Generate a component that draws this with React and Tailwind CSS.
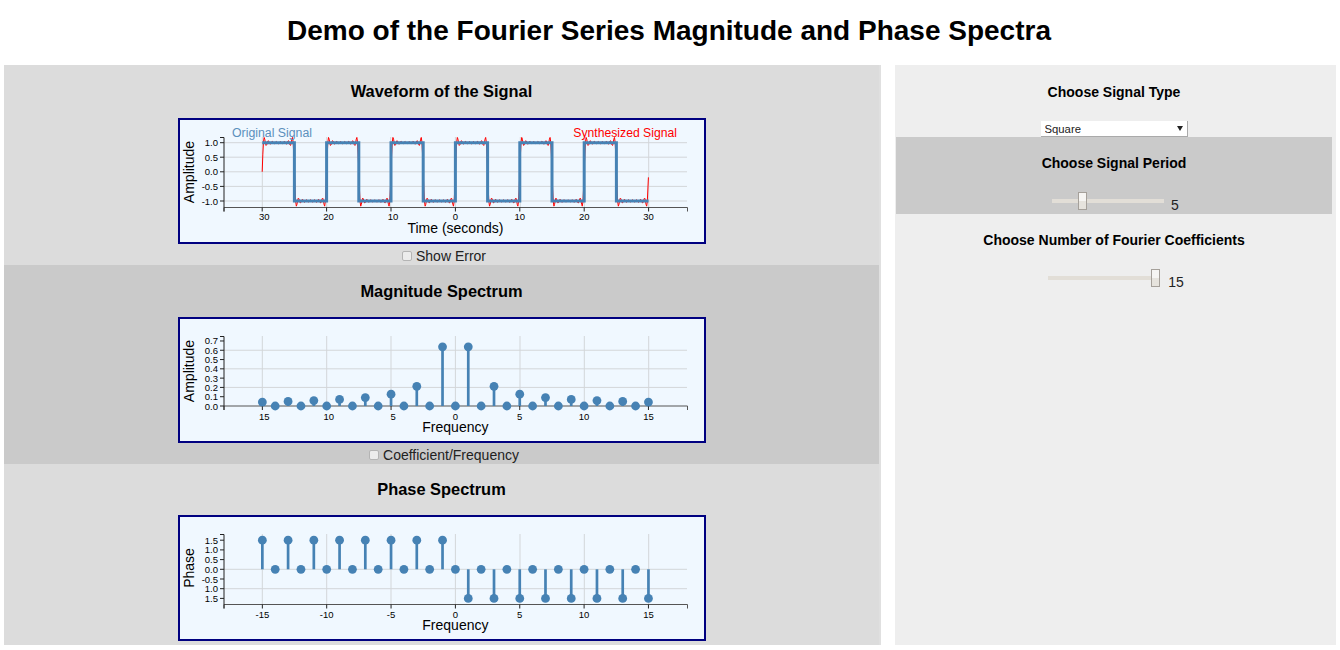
import React from "react";

const STEEL = "#4682b4";
const GRID = "#d3d6d9";
const FONT = { fontFamily: '"Liberation Sans", Arial, sans-serif' };

function Axes({ yAxisTop, xAxisY, cx, sx, xTicks, yTicks, yLabel, xLabel, xLabelY, yLabelX, yLabelY, hGrid, vGrid, gridTop, tickY }) {
  return (
    <g style={FONT}>
      {hGrid.map((y) => (
        <line key={"h" + y} x1={224} x2={687} y1={y} y2={y} stroke={GRID} strokeWidth={1} />
      ))}
      {vGrid.map((x) => (
        <line key={"v" + x} x1={x} x2={x} y1={gridTop} y2={xAxisY} stroke={GRID} strokeWidth={1} />
      ))}
      <path d={`M224 ${xAxisY + 4}V${xAxisY}H687.5V${xAxisY + 4}`} fill="none" stroke="#555" strokeWidth={1} />
      <path d={`M220 ${yAxisTop}H224V${xAxisY + 4}`} fill="none" stroke="#222" strokeWidth={1} />
      {xTicks.map(([v, label, dx]) => (
        <g key={"x" + v}>
          <line x1={cx + v * sx} x2={cx + v * sx} y1={xAxisY} y2={xAxisY + 4} stroke="#222" strokeWidth={1} />
          <text x={cx + v * sx + (dx || 0)} y={tickY} fontSize={9.5} textAnchor="middle" fill="#000">
            {label}
          </text>
        </g>
      ))}
      {yTicks.map(([y, label]) => (
        <g key={"y" + y}>
          <line x1={220} x2={224} y1={y} y2={y} stroke="#222" strokeWidth={1} />
          <text x={218} y={y + 3.5} fontSize={9.5} textAnchor="end" fill="#000">
            {label}
          </text>
        </g>
      ))}
      <text x={cx} y={xLabelY} fontSize={14} textAnchor="middle" fill="#000">
        {xLabel}
      </text>
      <text
        x={yLabelX}
        y={yLabelY}
        fontSize={14}
        textAnchor="middle"
        fill="#000"
        transform={`rotate(-90 ${yLabelX} ${yLabelY})`}
      >
        {yLabel}
      </text>
    </g>
  );
}

function ChartBox({ top, children }) {
  return (
    <div className="mx-auto h-[126px] w-[528px] border-2 border-[#000080] bg-[#f0f8ff]">
      <svg width={524} height={122} viewBox={`180 ${top + 2} 524 122`} className="block">
        {children}
      </svg>
    </div>
  );
}

function Waveform() {
  const cx = 455.4;
  const sx = 6.44;
  const y0 = 171.8;
  const sy = 29.15;
  const synth = [];
  for (let t = -30; t <= 29.97; t += 0.1) {
    const tt = t > 29.9 ? 29.97 : t;
    let s = 0;
    for (let n = 1; n <= 15; n += 2) s += (4 / Math.PI) * (Math.sin((2 * Math.PI * n * tt) / 10) / n);
    synth.push(`${(cx + sx * tt).toFixed(2)},${(y0 - sy * s).toFixed(2)}`);
  }
  const square = [];
  for (let k = -6; k < 6; k++) {
    const t1 = k * 5;
    const v = ((k % 2) + 2) % 2 === 0 ? 1 : -1;
    square.push(`${cx + sx * t1},${y0 - sy * v}`);
    square.push(`${cx + sx * (t1 + 5)},${y0 - sy * v}`);
  }
  const xTicks = [
    [-30, "30", 2],
    [-20, "20", 2],
    [-10, "10", 2],
    [0, "0", 0],
    [10, "10", 0],
    [20, "20", 0],
    [30, "30", 0],
  ];
  const yTicks = [
    [142.7, "1.0"],
    [157.2, "0.5"],
    [171.8, "0.0"],
    [186.4, "-0.5"],
    [201, "-1.0"],
  ];
  return (
    <ChartBox top={118}>
      <Axes
        yAxisTop={137.5}
        xAxisY={207.5}
        cx={cx}
        sx={sx}
        xTicks={xTicks}
        yTicks={yTicks}
        yLabel="Amplitude"
        xLabel="Time (seconds)"
        xLabelY={233}
        yLabelX={194}
        yLabelY={172}
        hGrid={[142.7, 157.2, 171.8, 186.4, 201]}
        vGrid={[262.3, 326.7, 390.7, 455.4, 520.3, 584.3, 648.7]}
        gridTop={137}
        tickY={220}
      />
      <polyline points={synth.join(" ")} fill="none" stroke="#ff0000" strokeWidth={1} />
      <polyline points={square.join(" ")} fill="none" stroke={STEEL} strokeWidth={3} />
      <text x={232} y={137} fontSize={12.3} fill="#5b8fbc" style={FONT}>
        Original Signal
      </text>
      <text x={677} y={137} fontSize={12.2} fill="#ff0000" textAnchor="end" style={FONT}>
        Synthesized Signal
      </text>
    </ChartBox>
  );
}

const specX = [-15, -10, -5, 0, 5, 10, 15];
const specGridX = [262.3, 326.7, 391, 455.4, 520, 584.3, 648.7];
const range = [];
for (let n = -15; n <= 15; n++) range.push(n);

function Stems({ cx, sx, y0, valueY }) {
  return range.map((n) => {
    const x = cx + n * sx;
    const y = valueY(n);
    return (
      <g key={n}>
        <line x1={x} x2={x} y1={y0} y2={y} stroke={STEEL} strokeWidth={2.7} />
        <circle cx={x} cy={y} r={4.4} fill={STEEL} />
      </g>
    );
  });
}

function Magnitude() {
  const cx = 455.4;
  const sx = 12.87;
  const y0 = 406;
  const sy = 92.9;
  const mag = (n) => (n % 2 === 0 ? 0 : 2 / (Math.PI * Math.abs(n)));
  const labels = [0.7, 0.6, 0.5, 0.4, 0.3, 0.2, 0.1, 0.0];
  return (
    <ChartBox top={317}>
      <Axes
        yAxisTop={336.5}
        xAxisY={406}
        cx={cx}
        sx={sx}
        xTicks={specX.map((v) => [v, String(Math.abs(v)), v < 0 ? 2 : 0])}
        yTicks={labels.map((v) => [y0 - v * sy, v.toFixed(1)])}
        yLabel="Amplitude"
        xLabel="Frequency"
        xLabelY={431.5}
        yLabelX={194}
        yLabelY={371}
        hGrid={[y0 - 0.6 * sy, y0 - 0.4 * sy, y0 - 0.2 * sy]}
        vGrid={specGridX}
        gridTop={336}
        tickY={419.5}
      />
      <Stems cx={cx} sx={sx} y0={y0} valueY={(n) => y0 - mag(n) * sy} />
    </ChartBox>
  );
}

function Phase() {
  const cx = 455.4;
  const sx = 12.87;
  const y0 = 569.3;
  const sy = 19.4;
  const ph = (n) => (n % 2 === 0 ? 0 : n < 0 ? 1.5 : -1.5);
  const yT = [
    [1.5, "1.5"],
    [1, "1.0"],
    [0.5, "0.5"],
    [0, "0.0"],
    [-0.5, "-0.5"],
    [-1, "1.0"],
    [-1.5, "1.5"],
  ];
  return (
    <ChartBox top={515}>
      <Axes
        yAxisTop={534.5}
        xAxisY={604.5}
        cx={cx}
        sx={sx}
        xTicks={specX.map((v) => [v, String(v), 0])}
        yTicks={yT.map(([v, l]) => [y0 - v * sy, l])}
        yLabel="Phase"
        xLabel="Frequency"
        xLabelY={630}
        yLabelX={194}
        yLabelY={568}
        hGrid={[y0, y0 + sy]}
        vGrid={specGridX}
        gridTop={534}
        tickY={617.5}
      />
      <Stems cx={cx} sx={sx} y0={y0} valueY={(n) => y0 - ph(n) * sy} />
    </ChartBox>
  );
}

function CheckRow({ label, shift }) {
  return (
    <label
      className="mt-[4px] flex h-[16px] items-center justify-center gap-[4px] text-[14px] leading-[16px] text-[#222]"
      style={{ paddingLeft: shift }}
    >
      <input
        type="checkbox"
        readOnly
        className="m-0 h-[10px] w-[10px] appearance-none rounded-[2px] border border-[#b4b4b4] bg-[#ececec]"
      />
      <span>{label}</span>
    </label>
  );
}

function Slider({ trackW, pos, value, gap, shift }) {
  return (
    <div className="flex items-center justify-center" style={{ paddingLeft: shift }}>
      <div className="relative h-[4px] bg-[#e2ded7]" style={{ width: trackW }}>
        <div
          className="absolute top-[-7px] h-[18px] w-[9px] border border-[#a5a09a] bg-gradient-to-b from-[#f6f5f3] from-50% to-[#e6e3dd] to-50%"
          style={{ left: pos }}
        />
      </div>
      <span className="relative top-[4px] text-[14px] leading-[16px] text-[#222]" style={{ marginLeft: gap }}>
        {value}
      </span>
    </div>
  );
}

export default function App() {
  return (
    <div className="h-[650px] w-[1340px] overflow-hidden bg-white text-black" style={FONT}>
      <h1 className="flex h-[65px] items-start justify-center pt-[14px] text-[28px] font-bold leading-[34px]">
        <span className="relative left-[-1px]">Demo of the Fourier Series Magnitude and Phase Spectra</span>
      </h1>
      <div className="flex h-[580px] items-start">
        <div className="ml-[4px] flex h-[580px] w-[877px] flex-col bg-[#e0e0e0]">
          <section className="h-[200px] w-[875px] bg-[#dcdcdc] pt-[16px]">
            <h3 className="mb-[17px] h-[20px] text-center text-[16.4px] font-bold leading-[20px]">Waveform of the Signal</h3>
            <Waveform />
            <CheckRow label="Show Error" shift={5} />
          </section>
          <section className="h-[199px] w-[875px] bg-[#cacaca] pt-[16px]">
            <h3 className="mb-[16px] h-[20px] text-center text-[16.4px] font-bold leading-[20px]">Magnitude Spectrum</h3>
            <Magnitude />
            <CheckRow label="Coefficient/Frequency" shift={5} />
          </section>
          <section className="w-[875px] flex-1 bg-[#dcdcdc] pt-[15px]">
            <h3 className="mb-[16px] h-[20px] text-center text-[16.4px] font-bold leading-[20px]">Phase Spectrum</h3>
            <Phase />
          </section>
        </div>
        <div className="ml-[14px] h-[580px] w-[441px] bg-[#eeeeee]">
          <div className="ml-[1px] h-[72px] w-[436px] pt-[19px]">
            <h3 className="h-[16px] text-center text-[14px] font-bold leading-[16px]">Choose Signal Type</h3>
            <div className="relative mx-auto mt-[21px] h-[16px] w-[147px]">
              <select
                className="block h-[16px] w-[147px] appearance-none rounded-none border-0 border-r border-b border-[#aaa] bg-white p-0 pl-[4px] text-[11.3px] leading-[14px] text-[#222]"
                defaultValue="Square"
              >
                <option>Square</option>
                <option>Triangle</option>
                <option>Sawtooth</option>
              </select>
              <svg width={6} height={5} viewBox="0 0 6 5" className="pointer-events-none absolute right-[5px] top-[5px]">
                <path d="M0 0H6L3 5Z" fill="#222" />
              </svg>
            </div>
          </div>
          <div className="ml-[1px] h-[77px] w-[436px] bg-[#cacaca] pt-[18px]">
            <h3 className="mb-[22px] h-[16px] text-center text-[14px] font-bold leading-[16px]">Choose Signal Period</h3>
            <Slider trackW={112} pos={26} value="5" gap={7} shift={3} />
          </div>
          <div className="ml-[1px] w-[436px] pt-[18px]">
            <h3 className="mb-[22px] h-[16px] text-center text-[14px] font-bold leading-[16px]">Choose Number of Fourier Coefficients</h3>
            <Slider trackW={112} pos={103} value="15" gap={8} shift={4} />
          </div>
        </div>
      </div>
    </div>
  );
}
